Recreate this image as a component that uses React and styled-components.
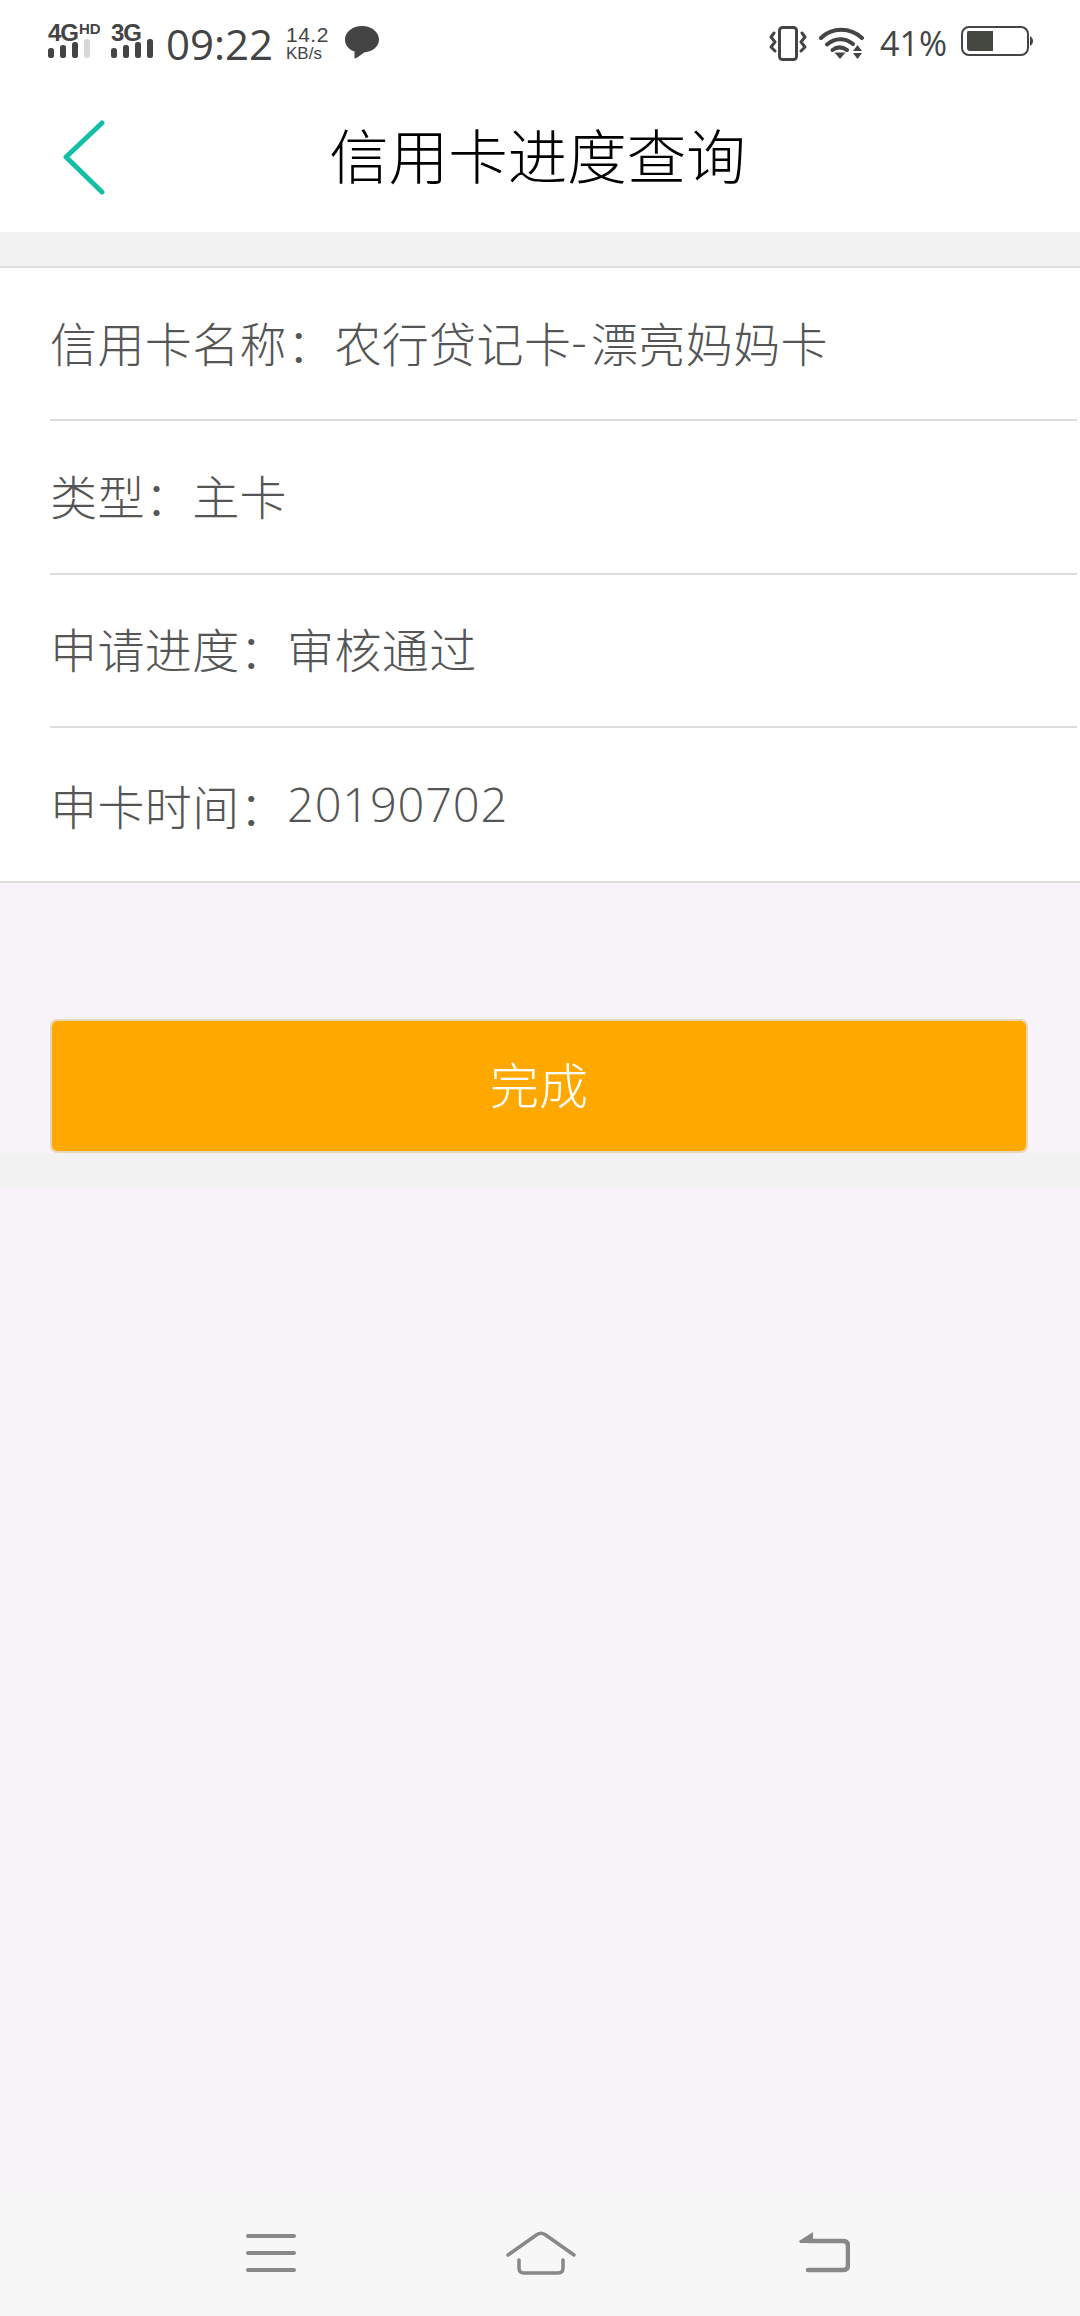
import React from 'react';
import styled, { createGlobalStyle } from 'styled-components';

const GlobalStyle = createGlobalStyle`
  html, body {
    margin: 0;
    padding: 0;
    background: #f7f3f8;
  }
  * {
    box-sizing: border-box;
  }
`;

const Page = styled.div`
  width: 1080px;
  height: 2316px;
  display: flex;
  flex-direction: column;
  background: #f7f3f8;
  font-family: "Open Sans", "Noto Sans CJK SC", "Liberation Sans", sans-serif;
`;

const StatusBar = styled.div`
  height: 80px;
  padding: 22px 47px 0 48px;
  display: flex;
  justify-content: space-between;
  align-items: flex-start;
  background: #fff;
  color: #444;
  font-family: "Liberation Sans", sans-serif;
`;

const StatusGroup = styled.div`
  display: flex;
  align-items: flex-start;
  margin-top: ${(p) => p.$top || 0}px;
`;

const Network = styled.div`
  width: ${(p) => p.$width}px;
  display: flex;
  flex-direction: column;
`;

const NetworkLabel = styled.div`
  height: 17px;
  font-size: 24px;
  line-height: 22px;
  font-weight: 700;
  white-space: nowrap;
  letter-spacing: -1px;
  sup {
    font-size: 15px;
    line-height: 13px;
    vertical-align: 7px;
    margin-left: 1px;
    letter-spacing: 0;
  }
`;

const Clock = styled.div`
  width: 120px;
  margin-top: 1px;
  font-size: 42px;
  line-height: 42px;
  font-family: "Open Sans", "Liberation Sans", sans-serif;
`;

const Speed = styled.div`
  width: 59px;
  margin-top: 3px;
  display: flex;
  flex-direction: column;
`;

const SpeedValue = styled.span`
  font-size: 21px;
  line-height: 20px;
  letter-spacing: 0.5px;
`;

const SpeedUnit = styled.span`
  font-size: 17px;
  line-height: 17px;
`;

const Bubble = styled.svg`
  margin-top: 4px;
`;

const Percent = styled.div`
  margin: -2px 14px 0 15px;
  font-size: 34px;
  line-height: 38px;
  font-family: "Open Sans", "Liberation Sans", sans-serif;
`;

const TitleBar = styled.header`
  height: 152px;
  position: relative;
  padding-right: 5px;
  display: flex;
  align-items: center;
  justify-content: center;
  background: #fff;
`;

const BackButton = styled.svg`
  position: absolute;
  left: 61px;
  top: 39px;
`;

const Title = styled.h1`
  margin: 0;
  font-size: 59.500px;
  line-height: 80px;
  font-weight: 300;
  color: #000;
`;

const Band = styled.div`
  height: 34px;
  background: #f2f2f2;
`;

const List = styled.section`
  background: #fff;
  border-top: 2px solid #dcdcdc;
  border-bottom: 2px solid #dcdcdc;
`;

const Row = styled.div`
  height: 153.250px;
  margin-left: 50px;
  margin-right: 3px;
  padding-bottom: ${(p) => (p.$last ? 0 : 5)}px;
  display: flex;
  align-items: center;
  font-size: 47px;
  font-weight: 300;
  letter-spacing: 0.4px;
  color: #555;
  white-space: nowrap;
  border-bottom: ${(p) => (p.$last ? 'none' : '2px solid #dcdcdc')};
`;

const Dash = styled.span`
  margin-right: 4px;
`;

const Digits = styled.span`
  letter-spacing: 0.8px;
`;

const DoneButton = styled.button`
  display: flex;
  align-items: center;
  justify-content: center;
  width: 978px;
  height: 134px;
  margin: 136px 0 0 50px;
  padding: 0 0 8px;
  border: 2px solid #e9d6b8;
  border-radius: 7px;
  background: #ffa800;
  background-clip: padding-box;
  color: #fff;
  font-family: inherit;
  font-weight: 300;
  font-size: 49px;
`;

const Filler = styled.div`
  flex: 1;
`;

const NavBar = styled.nav`
  height: 124px;
  padding: 0 0 3px 246px;
  display: flex;
  align-items: center;
  background: #f7f7f7;
`;

const NavItem = styled.div`
  width: ${(p) => p.$width}px;
  display: flex;
`;

const Bars = ({ lit }) => (
  <svg width="42" height="19" viewBox="0 0 42 19">
    {[0, 1, 2, 3].map((i) => {
      const h = 10 + i * 3;
      return (
        <rect
          key={i}
          x={i * 12}
          y={19 - h}
          width="6"
          height={h}
          rx="2.500"
          fill={i < lit ? '#444' : '#d8d8d8'}
        />
      );
    })}
  </svg>
);

const VibrateIcon = () => (
  <svg width="38" height="36" viewBox="0 0 38 36" fill="none" stroke="#444" strokeWidth="3" strokeLinecap="round" strokeLinejoin="round" style={{ marginRight: 12 }}>
    <rect x="10.500" y="1.500" width="17" height="32" rx="3" />
    <path d="M5 7l-3 4 4 5-4 5 4 4M33 7l3 4-4 5 4 5-4 4" />
  </svg>
);

const WifiIcon = () => (
  <svg width="46" height="34" viewBox="0 0 46 34" fill="none">
    <path d="M2 12C13 1 31 1 43 12" stroke="#444" strokeWidth="4" strokeLinecap="round" />
    <path d="M8 18.500C16 11.500 26 11.500 34 18" stroke="#444" strokeWidth="4" strokeLinecap="round" />
    <path d="M13.500 24C18 20.500 23 20.500 28 24" stroke="#444" strokeWidth="4" strokeLinecap="round" />
    <path d="M15.500 26.500h11L21 33zM38.500 19l4.500 6h-9zM34 27h9l-4.500 6z" fill="#444" />
  </svg>
);

const BubbleIcon = () => (
  <Bubble width="34" height="33" viewBox="0 0 34 33" fill="#444">
    <path d="M17 0C26.500 0 34 6 34 13.500S26.500 26 19 26.500C15.500 29 12.500 32 9.500 32.500L9.500 25.500C4 23.500 0 19.500 0 13.500 0 6 7.500 0 17 0Z" />
  </Bubble>
);

const BatteryIcon = () => (
  <svg width="72" height="30" viewBox="0 0 72 30" fill="none">
    <rect x="1" y="1" width="66" height="28" rx="7" stroke="#444" strokeWidth="2" />
    <path d="M7 5h25v20H9a3 3 0 0 1-3-3V7a2 2 0 0 1 1-2z" fill="#444840" />
    <path d="M69 10c2 1 3 3 3 5s-1 4-3 5z" fill="#444" />
  </svg>
);

const MenuIcon = () => (
  <svg width="50" height="38" viewBox="0 0 50 38" fill="none" stroke="#888" strokeWidth="4" strokeLinecap="round">
    <path d="M2 2h46M2 19h46M2 36h46" />
  </svg>
);

const HomeIcon = () => (
  <svg width="70" height="44" viewBox="0 0 70 44" fill="none" stroke="#888" strokeWidth="3.500" strokeLinecap="round" strokeLinejoin="round">
    <path d="M2 24L31 3.500Q35 1 39 3.500L68 24" />
    <path d="M13 29v8q0 5 5 5h34q5 0 5-5v-8" />
  </svg>
);

const ReturnIcon = () => (
  <svg width="52" height="42" viewBox="0 0 52 42" fill="none">
    <path d="M11 9h34q5 0 5 5v19q0 5-5 5H10" stroke="#888" strokeWidth="4.500" strokeLinecap="round" />
    <path d="M1 9L15 0v11H2z" fill="#888" />
  </svg>
);

const App = () => {
  return (
    <Page>
      <GlobalStyle />
      <StatusBar>
        <StatusGroup>
          <Network $width={63}>
            <NetworkLabel>4G<sup>HD</sup></NetworkLabel>
            <Bars lit={3} />
          </Network>
          <Network $width={55}>
            <NetworkLabel>3G</NetworkLabel>
            <Bars lit={4} />
          </Network>
          <Clock>09:22</Clock>
          <Speed>
            <SpeedValue>14.2</SpeedValue>
            <SpeedUnit>KB/s</SpeedUnit>
          </Speed>
          <BubbleIcon />
        </StatusGroup>
        <StatusGroup $top={4}>
          <VibrateIcon />
          <WifiIcon />
          <Percent>41%</Percent>
          <BatteryIcon />
        </StatusGroup>
      </StatusBar>
      <TitleBar>
        <BackButton width="48" height="76" viewBox="0 0 48 76" fill="none" stroke="#14bfa6" strokeWidth="5" strokeLinecap="round" strokeLinejoin="round">
          <path d="M41 4L5 38l36 35" />
        </BackButton>
        <Title>信用卡进度查询</Title>
      </TitleBar>
      <Band />
      <List>
        <Row>信用卡名称：农行贷记卡<Dash>-</Dash>漂亮妈妈卡</Row>
        <Row>类型：主卡</Row>
        <Row>申请进度：审核通过</Row>
        <Row $last>申卡时间：<Digits>20190702</Digits></Row>
      </List>
      <DoneButton>完成</DoneButton>
      <Band />
      <Filler />
      <NavBar>
        <NavItem $width={260}><MenuIcon /></NavItem>
        <NavItem $width={292}><HomeIcon /></NavItem>
        <NavItem $width={52}><ReturnIcon /></NavItem>
      </NavBar>
    </Page>
  );
};

export default App;
